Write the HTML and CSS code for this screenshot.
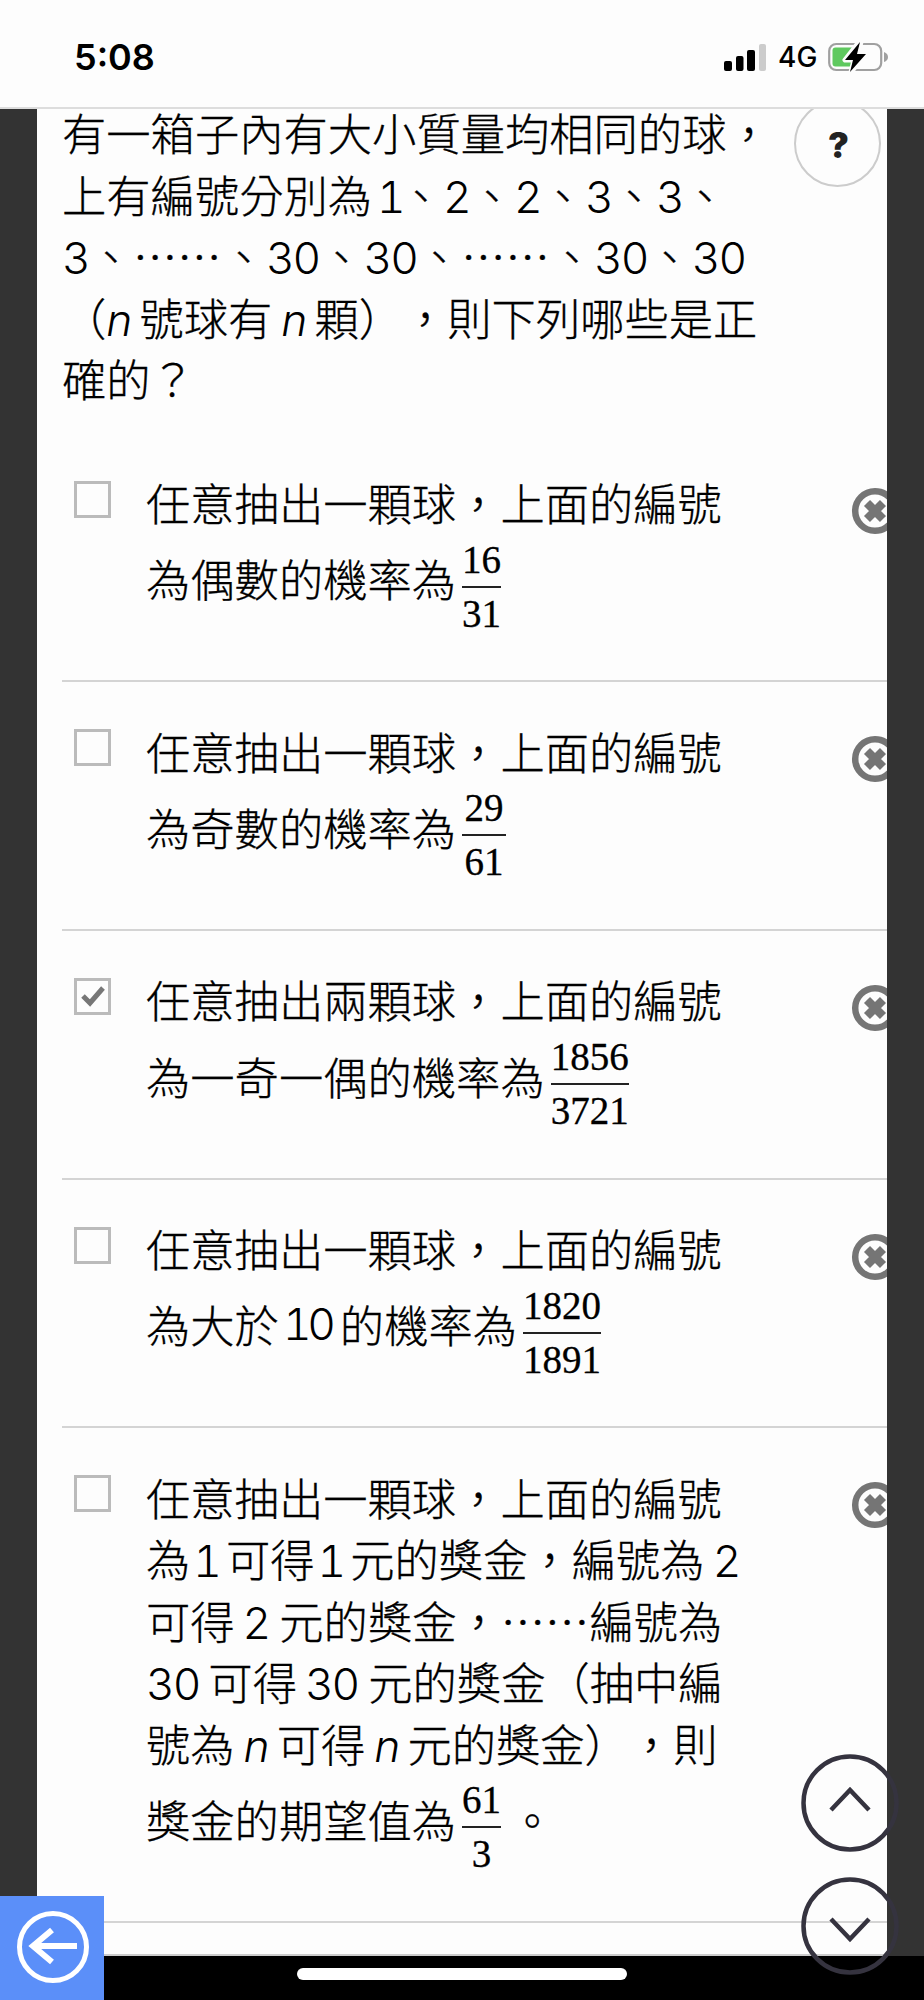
FILE: index.html
```
<!DOCTYPE html>
<html lang="zh-Hant">
<head>
    <meta charset="UTF-8">
    <meta name="viewport" content="width=device-width, initial-scale=1.0">
    <title>測驗</title>
    <link rel="stylesheet" href="styles.css">
</head>
<body>
    <header class="status">
        <span class="time">5:08</span>
        <div class="status-right">
            <svg class="signal" width="43" height="27" viewBox="0 0 43 27">
                <rect x="0" y="17" width="8" height="10" rx="2"/>
                <rect x="12" y="12" width="7.5" height="15" rx="2"/>
                <rect x="23" y="6" width="8" height="21" rx="2"/>
                <rect x="35" y="0" width="7" height="27" rx="2" fill="#ccc"/>
            </svg>
            <span class="network">4G</span>
            <svg class="battery" width="60" height="30" viewBox="0 0 60 30">
                <rect x="1.2" y="2" width="52" height="26" rx="7" fill="none" stroke="#a0a0a0" stroke-width="2.2"/>
                <path d="M56 10q4 1.500 4 5t-4 5z" fill="#a0a0a0"/>
                <rect x="4.500" y="5.500" width="27" height="19" rx="3" fill="#5fc95f"/>
                <path d="M31 0L17 18h9l-3 12L38 12h-8L33 0z" fill="#000" stroke="#fdfdfd" stroke-width="5" stroke-linejoin="round"/>
                <path d="M32 0L17 18h8l-3 12L38 12h-9z" fill="#000"/>
            </svg>
        </div>
    </header>

    <main class="page">
        <div class="question">
            <p>有一箱子內有大小質量均相同的球，</p>
            <p>上有編號分別為<span class="num first">1</span>、<span class="num">2</span>、<span class="num">2</span>、<span class="num">3</span>、<span class="num">3</span>、</p>
            <p><span class="num">3</span>、<span class="dots">⋯⋯</span>、<span class="num">30</span>、<span class="num">30</span>、<span class="dots">⋯⋯</span>、<span class="num">30</span>、<span class="num">30</span></p>
            <p>（<i>n</i>號球有<i class="gap">n</i>顆），則下列哪些是正</p>
            <p>確的？</p>
        </div>
        <div class="help">?</div>

        <ul class="options">
            <li>
                <span class="cb"></span>
                <div class="text">
                    <p>任意抽出一顆球，上面的編號</p>
                    <p class="math">為偶數的機率為<span class="frac"><span>16</span><span>31</span></span></p>
                </div>
                <svg class="del" viewBox="0 0 36 48"><use href="#cross"/></svg>
            </li>
            <li>
                <span class="cb"></span>
                <div class="text">
                    <p>任意抽出一顆球，上面的編號</p>
                    <p class="math">為奇數的機率為<span class="frac wide-bar"><span>29</span><span>61</span></span></p>
                </div>
                <svg class="del" viewBox="0 0 36 48"><use href="#cross"/></svg>
            </li>
            <li>
                <span class="cb">
                    <svg width="26" height="24" viewBox="0 0 26 24"><path d="M3 12l7 7L23 4" fill="none" stroke="#777" stroke-width="5"/></svg>
                </span>
                <div class="text">
                    <p>任意抽出兩顆球，上面的編號</p>
                    <p class="math">為一奇一偶的機率為<span class="frac"><span>1856</span><span>3721</span></span></p>
                </div>
                <svg class="del" viewBox="0 0 36 48"><use href="#cross"/></svg>
            </li>
            <li>
                <span class="cb"></span>
                <div class="text">
                    <p>任意抽出一顆球，上面的編號</p>
                    <p class="math">為大於<span class="num ten">10</span>的機率為<span class="frac"><span>1820</span><span>1891</span></span></p>
                </div>
                <svg class="del" viewBox="0 0 36 48"><use href="#cross"/></svg>
            </li>
            <li class="last">
                <span class="cb"></span>
                <div class="text">
                    <p>任意抽出一顆球，上面的編號</p>
                    <p>為<span class="num one">1</span>可得<span class="num one">1</span>元的獎金，編號為<span class="num wide">2</span></p>
                    <p>可得<span class="num wide">2</span>元的獎金，<span class="dots">⋯⋯</span>編號為</p>
                    <p><span class="num end">30</span>可得<span class="num wide">30</span>元的獎金（抽中編</p>
                    <p>號為<i class="gap">n</i>可得<i class="gap">n</i>元的獎金），則</p>
                    <p class="math">獎金的期望值為<span class="frac"><span>61</span><span>3</span></span><span class="stop">。</span></p>
                </div>
                <svg class="del" viewBox="0 0 36 48">
                    <g id="cross" fill="none" stroke="#757575">
                        <circle cx="24" cy="24" r="19.800" stroke-width="6.500"/>
                        <path d="M16 16l16 16M32 16L16 32" stroke-width="8.500"/>
                    </g>
                </svg>
            </li>
        </ul>
    </main>

    <div class="scroll">
        <svg width="98" height="98" viewBox="0 0 98 98">
            <circle cx="49" cy="49" r="46.500"/>
            <path d="M30 56L49 36l19 20"/>
        </svg>
        <svg width="98" height="98" viewBox="0 0 98 98">
            <circle cx="49" cy="49" r="46.500"/>
            <path d="M30 42l19 20 19-20"/>
        </svg>
    </div>

    <footer class="bottom"><span class="home"></span></footer>
    <a class="back">
        <svg width="72" height="72" viewBox="0 0 72 72" fill="none" stroke="#fff" stroke-width="5">
            <circle cx="36" cy="36" r="33.500"/>
            <path d="M60 35H15" stroke-width="6"/>
            <path d="M35 19L16 35l19 16" stroke-width="6"/>
        </svg>
    </a>
</body>
</html>
```

FILE: styles.css
```
* {
    box-sizing: border-box;
}

body {
    margin: 0;
    height: 2000px;
    overflow: hidden;
    position: relative;
    background-color: #333;
    color: #000;
    font-family: "Noto Sans CJK TC", sans-serif;
    font-weight: 300;
    text-spacing-trim: space-all;
}

p, ul {
    margin: 0;
    padding: 0;
}

.status {
    height: 109px;
    display: flex;
    justify-content: space-between;
    padding: 35px 36px 0 74px;
    background-color: #fdfdfd;
    border-bottom: 2px solid #ddd;
    font-family: Inter, sans-serif;
}

.time {
    font-size: 36px;
    line-height: 44px;
    font-weight: 600;
}

.status-right {
    display: flex;
    height: 44px;
    align-items: center;
}

.network {
    font-size: 28px;
    font-weight: 500;
    box-sizing: content-box;
    width: 37px;
    padding-left: 11px;
    margin-right: 13px;
}

.page {
    position: relative;
    width: 850px;
    height: 1847px;
    margin-left: 37px;
    padding-left: 25px;
    background-color: #fdfdfd;
    border-bottom: 2px solid #ccc;
}

.question {
    height: 324.5px;
}

.question p, .text p {
    font-size: 44.3px;
    line-height: 61.5px;
    height: 61.5px;
    white-space: nowrap;
    -webkit-text-stroke: 0.3px #000;
}

.question p:first-child {
    line-height: 47.5px;
    height: 54.5px;
}

.num, i {
    font-family: Inter, sans-serif;
    font-size: 44.3px;
    font-weight: 300;
    font-feature-settings: "tnum";
    letter-spacing: -2px;
    -webkit-text-stroke: 0;
}

i {
    margin-right: 7px;
    letter-spacing: 0;
}

i.gap {
    margin-left: 9px;
}

.wide {
    margin-left: 8px;
    margin-right: 10px;
}

.first {
    margin-left: 5px;
    letter-spacing: -7px;
}

.one {
    margin-left: 3px;
    margin-right: 6px;
}

.ten {
    margin-left: 4px;
    margin-right: 8px;
    letter-spacing: -4.2px;
}

.end {
    margin-right: 9px;
}

.help {
    position: absolute;
    left: 757px;
    top: -9px;
    width: 87px;
    height: 87px;
    border: 2px solid #ccc;
    border-radius: 50%;
    clip-path: inset(9px 0 0 0);
    text-align: center;
    font: 900 35px/87px Inter, sans-serif;
    color: #222;
    padding-left: 2px;
}

.options {
    list-style: none;
}

.options li {
    display: flex;
    height: 248.7px;
    border-bottom: 2px solid #d4d4d4;
}

.options .last {
    height: 495px;
}

.cb {
    flex: none;
    width: 37px;
    height: 37px;
    margin: 47px 36px 0 12px;
    border: 3px solid #bbb;
    display: flex;
    align-items: center;
    justify-content: center;
}

.text {
    width: 642px;
    padding-top: 38.5px;
    margin-left: -1px;
}

.text .math {
    display: flex;
    align-items: center;
    height: 91px;
}

.frac {
    display: inline-flex;
    flex-direction: column;
    margin: 15px 0 0 6px;
    text-align: center;
    font: 400 39px/36px "Liberation Serif", serif;
}

.frac span:first-child {
    padding-bottom: 8px;
    border-bottom: 2px solid #222;
}

.frac span:last-child {
    padding-top: 8px;
}

.wide-bar {
    width: 44px;
}

.stop {
    margin-left: 9px;
}

.del {
    flex: none;
    width: 36px;
    height: 48px;
    margin: 53px 0 0 75px;
}

.scroll {
    position: absolute;
    left: 801px;
    top: 1754px;
    z-index: 3;
    display: flex;
    flex-direction: column;
    gap: 25px;
}

.scroll svg {
    fill: none;
    stroke: #35333f;
    stroke-width: 4.5px;
}

.bottom {
    height: 44px;
    background-color: #000;
    display: flex;
    justify-content: center;
    padding-top: 12px;
}

.home {
    width: 330px;
    height: 12px;
    border-radius: 6px;
    background-color: #fff;
}

.back {
    position: absolute;
    left: 0;
    bottom: 0;
    width: 104px;
    height: 104px;
    padding: 15px 0 0 17px;
    background-color: #5b8ff9;
}
```
